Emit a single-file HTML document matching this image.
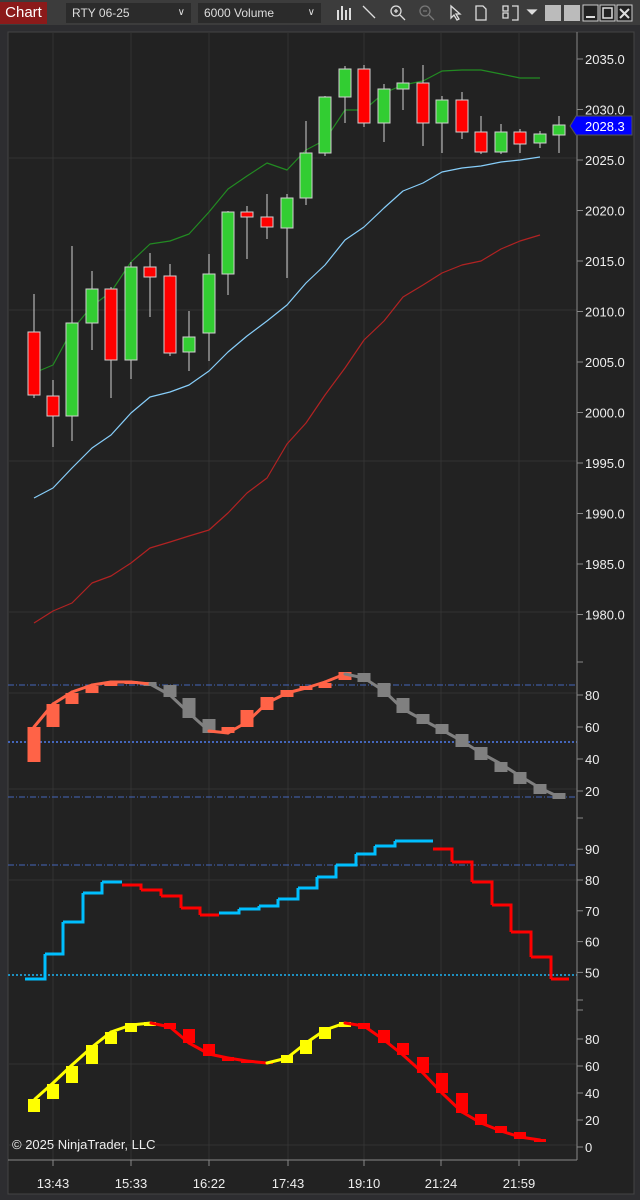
<!DOCTYPE html>
<html><head><meta charset="utf-8"><style>
html,body{margin:0;padding:0;background:#2d2d30;width:640px;height:1200px;overflow:hidden;font-family:"Liberation Sans",sans-serif}
#tb{position:absolute;left:0;top:0;width:640px;height:25px;background:#3c3c3c}
.chart{position:absolute;left:0;top:2px;width:47px;height:22px;background:#8b1a1a;color:#fff;font-size:15px;line-height:22px;text-align:center}
.dd{position:absolute;top:3px;height:20px;background:#2b2b2b;color:#ddd;font-size:12px;line-height:20px;padding-left:6px;box-sizing:border-box}
.dd span{position:absolute;right:6px;top:0;font-size:10px}
svg{position:absolute;left:0;top:0}
</style></head><body>
<div id="tb">
<div class="chart">Chart</div>
<div class="dd" style="left:66px;width:125px">RTY 06-25<span>&#8744;</span></div>
<div class="dd" style="left:198px;width:123px">6000 Volume<span>&#8744;</span></div>
</div>
<svg width="640" height="1200" viewBox="0 0 640 1200" id="s" style="top:0">
<rect x="8" y="32" width="626" height="1162" fill="#222222" stroke="#444" stroke-width="1"/>
<g id="tbicons" fill="none" stroke="#ddd" stroke-width="1.3">
<path d="M338 10v10M342 6v14M346 10v10M350 8v12" stroke-width="2"/>
<path d="M365 8l10 10M363 6l3 3" />
<circle cx="396" cy="11" r="5"/><path d="M400 15l5 5M394 11h4M396 9v4"/>
<circle cx="425" cy="11" r="5" stroke="#777"/><path d="M429 15l5 5M423 11h4" stroke="#777"/>
<path d="M451 6v12l3-3 3 5 2-1-3-5h4z"/>
<path d="M476 6h7l3 3v11h-10z"/>
<path d="M503 6h5v5h-5zM503 13h5v5h-5zM512 6h6v14h-6"/>
<path d="M528 10h8l-4 4z" fill="#ddd"/>
</g>
<rect x="545" y="5" width="16" height="16" fill="#bbb"/>
<rect x="564" y="5" width="16" height="16" fill="#bbb"/>
<rect x="583" y="5" width="15" height="16" fill="#222" stroke="#ccc"/><path d="M586 17h9" stroke="#ddd" stroke-width="2"/>
<rect x="600" y="5" width="15" height="16" fill="#222" stroke="#ccc"/><rect x="603" y="8" width="9" height="10" fill="none" stroke="#ddd" stroke-width="1.5"/>
<rect x="617" y="5" width="15" height="16" fill="#222" stroke="#ccc"/><path d="M620 9l9 9M629 9l-9 9" stroke="#ddd" stroke-width="2"/>
<g id="grid" stroke="#333" stroke-width="1"></g>
<g id="plot"></g>
<line x1="577" y1="32" x2="577" y2="1160" stroke="#888"/>
<line x1="8" y1="1160" x2="577" y2="1160" stroke="#888"/>
<g id="axis" fill="#eee" font-size="13" font-family="Liberation Sans, sans-serif"></g>
<polygon points="570,126 576,116 632,116 632,135 576,135" fill="#0000ff" stroke="#555"/>
<text x="585" y="131" fill="#fff" font-size="13" font-family="Liberation Sans, sans-serif">2028.3</text>
<text x="12" y="1149" fill="#eee" font-size="13" font-family="Liberation Sans, sans-serif">© 2025 NinjaTrader, LLC</text>
</svg>
<script>
var NS="http://www.w3.org/2000/svg";
function el(p,t,a){var e=document.createElementNS(NS,t);for(var k in a)e.setAttribute(k,a[k]);document.getElementById(p).appendChild(e);return e;}
var X=[34,53,72,92,111,131,150,170,189,209,228,247,267,287,306,325,345,364,384,403,423,442,462,481,501,520,540,559];
// grid
[53,131,209,288,364,441,519].forEach(function(x){el("grid","line",{x1:x,y1:32,x2:x,y2:1160});});
[158,310,461,612,693,789,880,1064,1145].forEach(function(y){el("grid","line",{x1:8,y1:y,x2:577,y2:y});});
// candles
var C=[[332,395,294,398,0],[396,416,380,447,0],[323,416,246,441,1],[289,323,271,350,1],[289,360,287,398,0],[267,360,262,379,1],[267,277,253,317,0],[276,353,264,356,0],[337,352,311,371,1],[274,333,254,361,1],[212,274,211,295,1],[212,217,206,259,0],[217,227,194,239,0],[198,228,194,278,1],[153,198,121,205,1],[97,153,96,156,1],[69,97,66,123,1],[69,123,65,127,0],[89,123,84,142,1],[83,89,68,110,1],[83,123,65,146,0],[100,123,96,153,1],[100,132,92,139,0],[132,152,116,154,0],[132,152,124,154,1],[132,144,129,153,0],[134,143,131,148,1],[125,135,116,153,1]];
// MAs
function pl(pts,col,w){el("plot","polyline",{points:pts.map(function(p){return p.join(",")}).join(" "),fill:"none",stroke:col,"stroke-width":w||1,"stroke-linejoin":"round"});}
var G=[373,365,330,306,292,262,244,241,234,212,189,176,163,170,150,140,110,110,93,85,81,71,70,70,74,78,78];
var B=[498,488,468,448,435,413,397,392,385,371,352,336,321,305,283,265,240,227,208,191,183,172,168,166,162,160,157];
var R=[623,611,603,583,576,563,548,542,536,530,513,493,478,444,423,395,368,340,321,297,285,273,265,261,249,241,235];
pl(G.map(function(y,i){return[X[i],y]}),"#228b22",1.2);
pl(B.map(function(y,i){return[X[i],y]}),"#87cefa",1.2);
pl(R.map(function(y,i){return[X[i],y]}),"#b22222",1.2);
C.forEach(function(c,i){var x=X[i];el("plot","line",{x1:x,y1:c[2],x2:x,y2:c[3],stroke:"#d0d0d0","stroke-width":1});
el("plot","rect",{x:x-6,y:c[0],width:12,height:Math.max(c[1]-c[0],3),fill:c[4]?"#32cd32":"#ff0000",stroke:"#d0d0d0","stroke-width":1});});
// panel2 dotted
function hl(y,col,dash,w){el("plot","line",{x1:8,y1:y,x2:577,y2:y,stroke:col,"stroke-dasharray":dash,"stroke-width":w||1});}
hl(685,"#4466bb","6 2 1 2");hl(742,"#4466bb","2 2",2);hl(797,"#4466bb","6 2 1 2");
var L2=[727,704,692,685,682,682,684,695,713,731,733,722,703,693,688,682,674,678,691,709,720,730,741,753,764,776,788,797];
var B2=[[727,762],[704,727],[693,704],[686,693],[683,686],[681,684],[682,686],[685,697],[698,718],[719,733],[727,733],[710,727],[697,710],[690,697],[686,690],[683,688],[672,680],[673,682],[683,697],[698,713],[714,724],[724,734],[734,747],[747,760],[762,772],[772,784],[784,794],[793,799]];
var OR="#ff6347",GR="#808080";
function c2(i){return (i<=5||(i>=10&&i<=16))?OR:GR;}
B2.forEach(function(b,i){el("plot","rect",{x:X[i]-6.5,y:b[0],width:13,height:b[1]-b[0],fill:c2(i)});});
for(var i=0;i<27;i++){var col=(i<6||(i>=9&&i<16))?OR:GR;el("plot","line",{x1:X[i],y1:L2[i],x2:X[i+1],y2:L2[i+1],stroke:col,"stroke-width":3,"stroke-linecap":"round"});}
// panel3
hl(865,"#4466bb","6 2 1 2");hl(975,"#1e90c0","2 2",2);
var S=[[25,979,1],[45,954,1],[63,922,1],[83,893,1],[102,882,1],[122,885,0],[141,890,0],[161,896,0],[181,908,0],[200,915,0],[219,913,1],[239,909,1],[259,906,1],[278,899,1],[298,888,1],[317,877,1],[336,865,1],[356,854,1],[375,846,1],[395,841,1],[433,849,0],[452,862,0],[472,882,0],[492,905,0],[511,932,0],[531,957,0],[551,979,0]];
var ends=S.map(function(s,i){return i<S.length-1?S[i+1][0]:569;});
S.forEach(function(s,i){var col=s[2]?"#00bfff":"#ff0000";var d="M"+s[0]+" "+s[1]+"H"+ends[i];
if(i<S.length-1&&S[i+1][2]==s[2])d+="V"+S[i+1][1];
el("plot","path",{d:d,fill:"none",stroke:col,"stroke-width":3});});
// panel4
var L4=[[35,1099],[53,1083],[72,1065],[92,1047],[111,1032],[131,1025],[151,1023],[170,1027],[189,1043],[209,1054],[228,1058],[247,1061],[267,1063],[287,1058],[306,1043],[325,1030],[345,1023],[364,1026],[384,1040],[403,1055],[423,1073],[442,1093],[462,1112],[481,1123],[501,1131],[520,1137],[540,1140]];
var B4=[[1099,1112],[1084,1099],[1066,1083],[1045,1064],[1032,1044],[1023,1032],[1022,1026],[1023,1029],[1029,1043],[1044,1056],[1057,1061],[1060,1063],[1062,1064],[1055,1063],[1040,1054],[1027,1039],[1022,1027],[1023,1029],[1030,1043],[1043,1055],[1057,1073],[1073,1093],[1093,1113],[1114,1125],[1126,1133],[1132,1139],[1139,1142]];
function c4(i){return (i<=6||(i>=13&&i<=16))?"#ffff00":"#ff0000";}
B4.forEach(function(b,i){el("plot","rect",{x:X[i]-6,y:b[0],width:12,height:b[1]-b[0],fill:c4(i)});});
for(var i=0;i<26;i++){var col=(i<6||(i>=12&&i<16))?"#ffff00":"#ff0000";el("plot","line",{x1:L4[i][0],y1:L4[i][1],x2:L4[i+1][0],y2:L4[i+1][1],stroke:col,"stroke-width":3,"stroke-linecap":"round"});}
// axis
function lab(y,t,tick){el("axis","line",{x1:577,y1:y,x2:583,y2:y,stroke:"#888"});if(t!=="")el("axis","text",{x:585,y:y+5}).textContent=t;}
[2035,2030,2025,2020,2015,2010,2005,2000,1995,1990,1985,1980].forEach(function(p){var y=160-(p-2025)*10.1;lab(y,p+".0");});
lab(662,"");[80,60,40,20].forEach(function(v){lab(823-1.6*v,v);});lab(818,"");
[90,80,70,60,50].forEach(function(v){lab(880-(v-80)*3.08,v);});lab(1000,"");
lab(1010,"");[80,60,40,20,0].forEach(function(v){lab(1147-1.35*v,v);});
var T=[[53,"13:43"],[131,"15:33"],[209,"16:22"],[288,"17:43"],[364,"19:10"],[441,"21:24"],[519,"21:59"]];
T.forEach(function(t){el("axis","line",{x1:t[0],y1:1160,x2:t[0],y2:1166,stroke:"#888"});var e=el("axis","text",{x:t[0],y:1188,"text-anchor":"middle"});e.textContent=t[1];});
</script>
</body></html>
